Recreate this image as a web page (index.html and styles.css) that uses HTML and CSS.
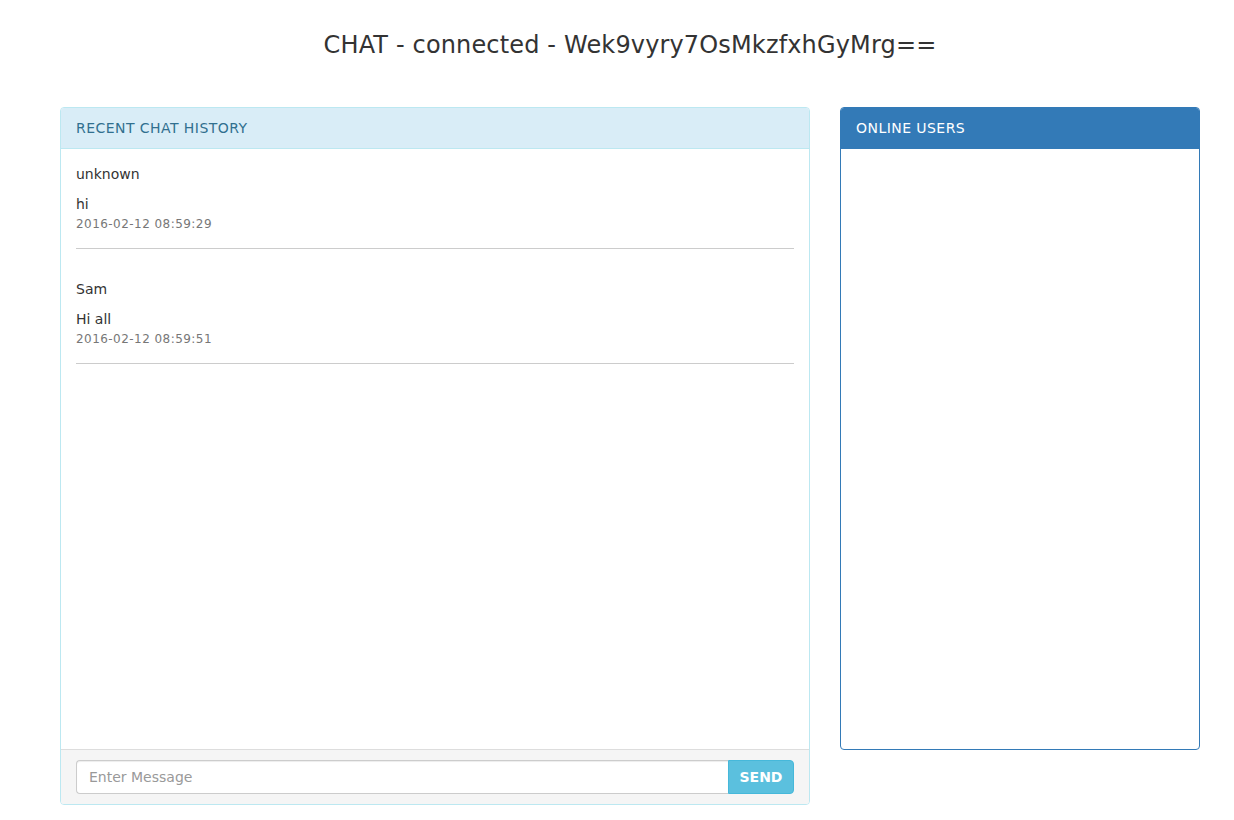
FILE: index.html
```html
<!DOCTYPE html>
<html>
<head>
<meta charset="utf-8">
<link rel="stylesheet" href="styles.css">
</head>
<body>
<div class="container">
  <h1 class="title">CHAT - connected - Wek9vyry7OsMkzfxhGyMrg==</h1>
  <div class="row">
    <div class="panel panel-info chat">
      <div class="panel-heading">RECENT CHAT HISTORY</div>
      <div class="panel-body">
        <div class="msg">
          <div class="name">unknown</div>
          <div class="text">hi</div>
          <div class="date">2016-02-12 08:59:29</div>
          <hr>
        </div>
        <div class="msg">
          <div class="name">Sam</div>
          <div class="text">Hi all</div>
          <div class="date">2016-02-12 08:59:51</div>
          <hr>
        </div>
      </div>
      <div class="panel-footer">
        <div class="input-group">
          <input type="text" class="form-control" placeholder="Enter Message">
          <button class="btn-send">SEND</button>
        </div>
      </div>
    </div>
    <div class="panel panel-primary users">
      <div class="panel-heading">ONLINE USERS</div>
      <div class="panel-body"></div>
    </div>
  </div>
</div>
</body>
</html>
```
FILE: styles.css
```css
* { box-sizing: border-box; }
body {
  margin: 0;
  background: #fff;
  font-family: "DejaVu Sans", Verdana, sans-serif;
  font-size: 14px;
  line-height: 20px;
  color: #333;
}
.container {
  width: 1140px;
  margin-left: 60px;
}
.title {
  margin: 0;
  padding-top: 28px;
  height: 107px;
  font-size: 24px;
  letter-spacing: 0.15px;
  line-height: 34px;
  font-weight: normal;
  text-align: center;
  color: #333;
}
.row {
  display: flex;
  gap: 30px;
  align-items: flex-start;
}
.panel {
  border: 1px solid;
  border-radius: 4px;
  background: #fff;
}
.chat { width: 750px; }
.users { width: 360px; }
.panel-heading {
  height: 41px;
  padding: 10px 15px;
  font-size: 14px;
  letter-spacing: 0.45px;
  line-height: 20px;
  border-bottom: 1px solid;
  border-radius: 3px 3px 0 0;
}
.panel-info { border-color: #bce8f1; }
.panel-info .panel-heading {
  background: #d9edf7;
  color: #31708f;
  border-bottom-color: #bce8f1;
}
.panel-primary { border-color: #337ab7; }
.panel-primary .panel-heading {
  background: #337ab7;
  color: #fff;
  border-bottom-color: #337ab7;
}
.panel-body {
  height: 600px;
  padding: 15px;
}
.msg + .msg { padding-top: 10px; }
.name { margin-bottom: 10px; }
.date {
  font-size: 12px;
  letter-spacing: 0.45px;
  color: #777;
}
hr {
  margin: 14px 0 20px;
  border: 0;
  border-top: 1px solid #ccc;
}
.panel-footer {
  padding: 10px 15px;
  background: #f5f5f5;
  border-top: 1px solid #ddd;
  border-radius: 0 0 3px 3px;
}
.input-group {
  display: flex;
  height: 34px;
}
.form-control {
  flex: 1;
  height: 34px;
  padding: 6px 12px;
  font-family: inherit;
  font-size: 14px;
  color: #555;
  border: 1px solid #ccc;
  border-right: 0;
  border-radius: 4px 0 0 4px;
  box-shadow: inset 0 1px 1px rgba(0,0,0,.075);
  outline: none;
}
.form-control::placeholder { color: #999; }
.btn-send {
  width: 66px;
  height: 34px;
  padding: 0;
  font-family: inherit;
  font-size: 14px;
  font-weight: bold;
  color: #fff;
  background: #5bc0de;
  border: 1px solid #46b8da;
  border-radius: 0 4px 4px 0;
}
```
